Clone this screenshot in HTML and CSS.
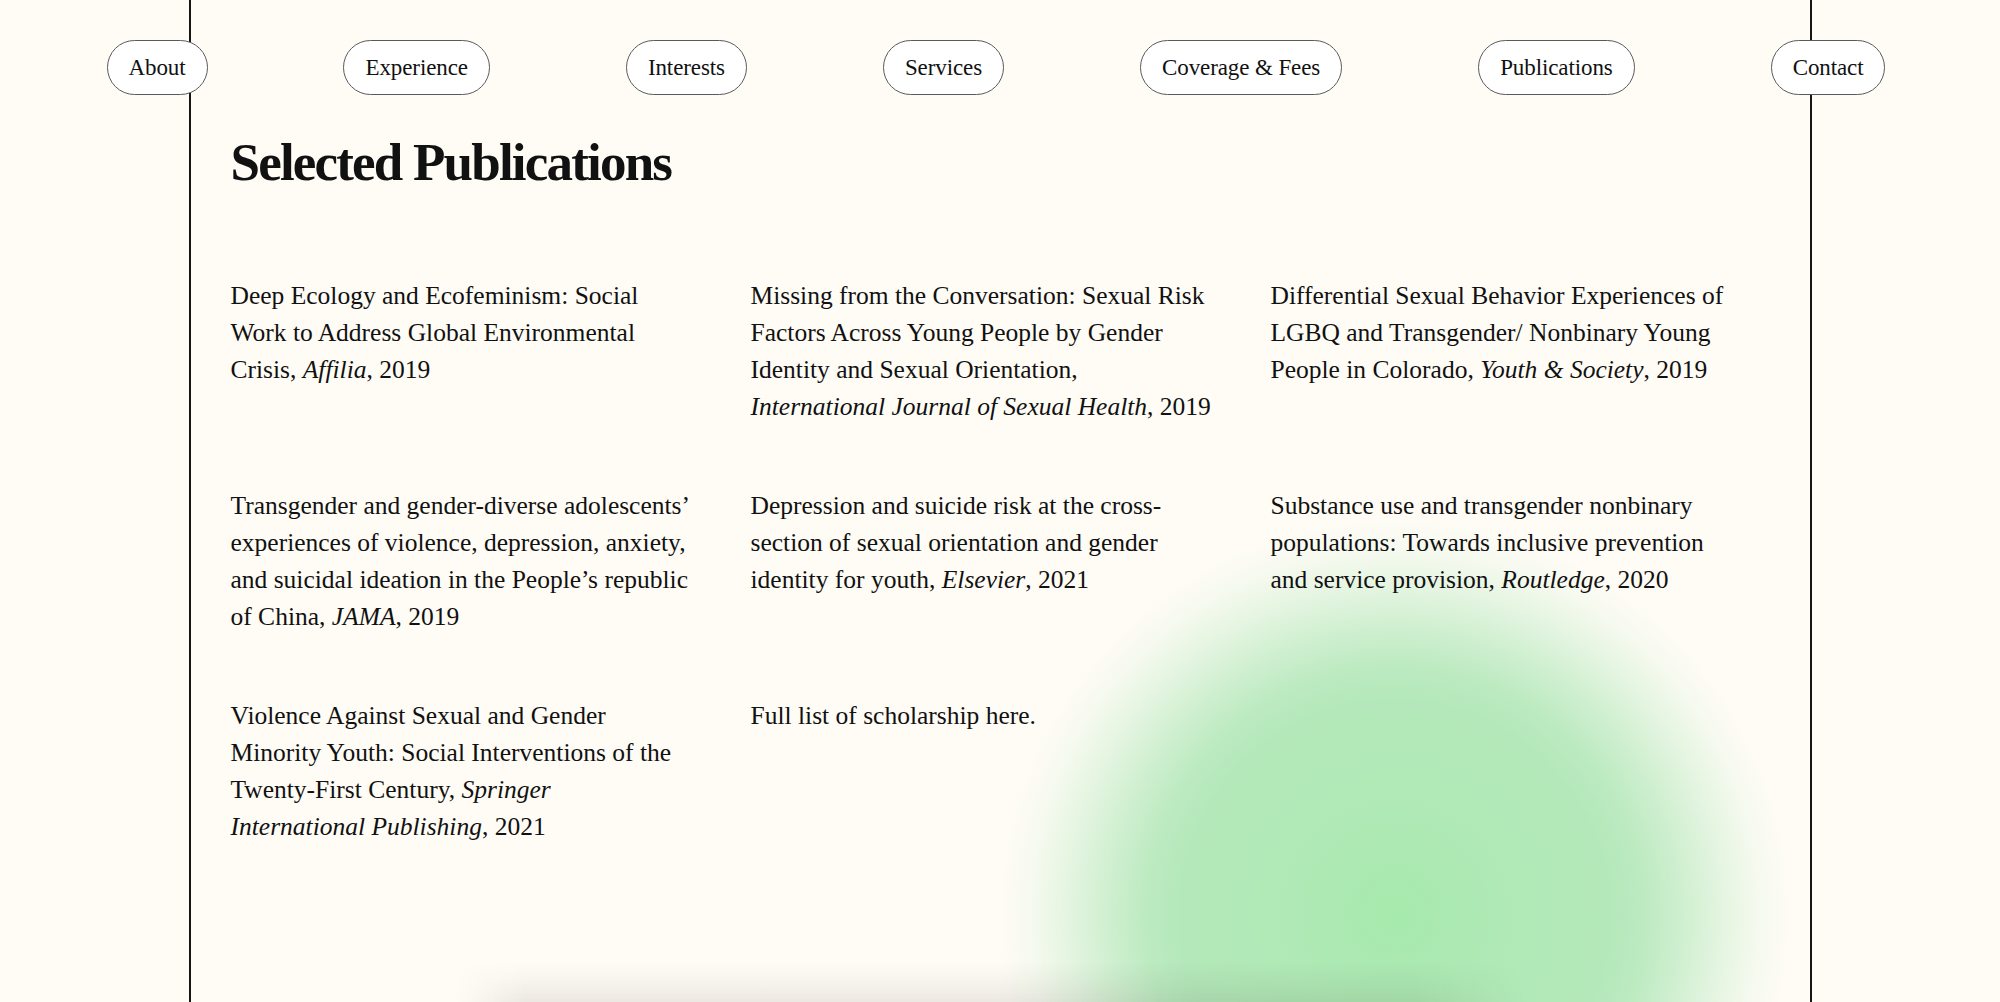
FILE: index.html
```html
<!DOCTYPE html>
<html lang="en">
<head>
<meta charset="utf-8">
<title>Selected Publications</title>
<link rel="stylesheet" href="styles.css">
</head>
<body>
<div class="backdrop" aria-hidden="true">
  <div class="shade"></div>
</div>
<div class="frame">
  <nav class="nav">
    <a class="pill" href="#">About</a>
    <a class="pill" href="#">Experience</a>
    <a class="pill" href="#">Interests</a>
    <a class="pill" href="#">Services</a>
    <a class="pill" href="#">Coverage &amp; Fees</a>
    <a class="pill" href="#">Publications</a>
    <a class="pill" href="#">Contact</a>
  </nav>
  <main class="content">
    <h1 class="title">Selected Publications</h1>
    <div class="pubs">
      <p class="pub">Deep Ecology and Ecofeminism: Social<br>Work to Address Global Environmental<br>Crisis, <i>Affilia</i>, 2019</p>
      <p class="pub">Missing from the Conversation: Sexual Risk<br>Factors Across Young People by Gender<br>Identity and Sexual Orientation,<br><i>International Journal of Sexual Health</i>, 2019</p>
      <p class="pub">Differential Sexual Behavior Experiences of<br>LGBQ and Transgender/ Nonbinary Young<br>People in Colorado, <i>Youth &amp; Society</i>, 2019</p>
      <p class="pub">Transgender and gender-diverse adolescents’<br>experiences of violence, depression, anxiety,<br>and suicidal ideation in the People’s republic<br>of China, <i>JAMA</i>, 2019</p>
      <p class="pub">Depression and suicide risk at the cross-<br>section of sexual orientation and gender<br>identity for youth, <i>Elsevier</i>, 2021</p>
      <p class="pub">Substance use and transgender nonbinary<br>populations: Towards inclusive prevention<br>and service provision, <i>Routledge</i>, 2020</p>
      <p class="pub">Violence Against Sexual and Gender<br>Minority Youth: Social Interventions of the<br>Twenty-First Century, <i>Springer</i><br><i>International Publishing</i>, 2021</p>
      <p class="pub">Full list of scholarship here.</p>
    </div>
  </main>
</div>
</body>
</html>
```

FILE: styles.css
```css
html, body {
  margin: 0;
  padding: 0;
}

body {
  background: #fffcf6;
  color: #111;
  font-family: "Liberation Serif", "Times New Roman", serif;
  position: relative;
  height: 1002px;
  overflow: hidden;
}

.backdrop {
  position: absolute;
  inset: 0;
  z-index: 0;
  overflow: hidden;
  background: radial-gradient(circle 400px at 1395px 915px,
    rgba(166, 234, 173, 1) 0px,
    rgba(176, 233, 182, 1) 110px,
    rgba(180, 232, 186, 1) 215px,
    rgba(180, 232, 186, 0.88) 250px,
    rgba(180, 232, 186, 0.62) 290px,
    rgba(180, 232, 186, 0.34) 330px,
    rgba(180, 232, 186, 0.12) 365px,
    rgba(180, 232, 186, 0) 400px);
}

.shade {
  position: absolute;
  left: 455px;
  top: 962px;
  width: 1070px;
  height: 40px;
  background: linear-gradient(to bottom, rgba(40, 30, 20, 0) 0%, rgba(40, 30, 20, 0.035) 45%, rgba(40, 30, 20, 0.085) 100%);
  -webkit-mask-image: linear-gradient(to right, transparent 0, #000 70px, #000 960px, transparent 1070px);
  mask-image: linear-gradient(to right, transparent 0, #000 70px, #000 960px, transparent 1070px);
}

.frame {
  position: relative;
  z-index: 1;
  box-sizing: border-box;
  width: 1623px;
  height: 1002px;
  margin: 0 auto;
  border-left: 2px solid #161616;
  border-right: 2px solid #161616;
  padding-top: 40px;
}

.nav {
  display: flex;
  justify-content: space-between;
  align-items: center;
  margin: 0 -76px 0 -84px;
}

.pill {
  box-sizing: border-box;
  height: 55px;
  display: flex;
  align-items: center;
  padding: 0 21px;
  border: 1px solid #5a5a5a;
  border-radius: 28px;
  background: #ffffff;
  color: #111;
  text-decoration: none;
  font-size: 23px;
  letter-spacing: -0.1px;
}

.content {
  padding-left: 40px;
}

.title {
  margin: 38px 0 0;
  font-size: 53px;
  line-height: 58px;
  font-weight: 700;
  letter-spacing: -1.8px;
}

.pubs {
  margin-top: 86px;
  display: grid;
  grid-template-columns: repeat(3, 460px);
  column-gap: 60px;
  row-gap: 62px;
}

.pub {
  margin: 0;
  font-size: 25.5px;
  line-height: 37px;
  white-space: nowrap;
}
```
